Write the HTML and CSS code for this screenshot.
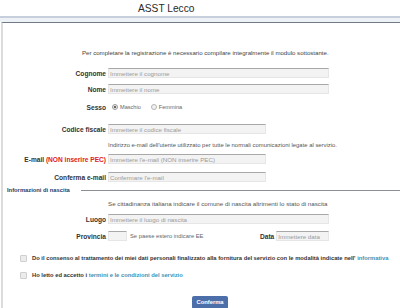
FILE: index.html
```html
<!DOCTYPE html>
<html lang="it">
<head>
    <meta charset="UTF-8">
    <meta name="viewport" content="width=device-width, initial-scale=1.0">
    <title>ASST Lecco - Registrazione</title>
    <link rel="stylesheet" href="styles.css">
</head>
<body>

    <!-- TESTATA -->
    <div class="testata">
        <span class="titolo">ASST Lecco</span>
    </div>
    <div class="fascia"></div>

    <!-- MODULO -->
    <div class="riquadro">
        <p class="intro">Per completare la registrazione è necessario compilare integralmente il modulo sottostante.</p>

        <form name="registrazione" class="modulo">
            <div class="riga r-cognome">
                <label class="lbl" for="cognome">Cognome</label>
                <input class="campo lungo" type="text" id="cognome" placeholder="Immettere il cognome">
            </div>
            <div class="riga r-nome">
                <label class="lbl" for="nome">Nome</label>
                <input class="campo lungo" type="text" id="nome" placeholder="Immettere il nome">
            </div>
            <div class="riga r-sesso">
                <span class="lbl">Sesso</span>
                <div class="scelte">
                    <label class="scelta"><input type="radio" name="sesso" checked> Maschio</label>
                    <label class="scelta"><input type="radio" name="sesso"> Femmina</label>
                </div>
            </div>
            <div class="riga r-codice">
                <label class="lbl" for="cf">Codice fiscale</label>
                <input class="campo medio" type="text" id="cf" placeholder="Immettere il codice fiscale">
            </div>
            <div class="riga r-nota1">
                <span class="lbl"></span>
                <span class="nota">Indirizzo e-mail dell'utente utilizzato per tutte le normali comunicazioni legate al servizio.</span>
            </div>
            <div class="riga r-email">
                <label class="lbl" for="email">E-mail <span class="rosso">(NON inserire PEC)</span></label>
                <input class="campo medio" type="text" id="email" placeholder="Immettere l'e-mail (NON inserire PEC)">
            </div>
            <div class="riga r-conferma">
                <label class="lbl" for="email2">Conferma e-mail</label>
                <input class="campo medio" type="text" id="email2" placeholder="Confermare l'e-mail">
            </div>

            <div class="sezione">
                <span class="sezione-titolo">Informazioni di nascita</span>
                <span class="sezione-linea"></span>
            </div>

            <div class="riga r-nota2">
                <span class="lbl"></span>
                <span class="nota">Se cittadinanza italiana indicare il comune di nascita altrimenti lo stato di nascita</span>
            </div>
            <div class="riga r-luogo">
                <label class="lbl" for="luogo">Luogo</label>
                <input class="campo lungo" type="text" id="luogo" placeholder="Immettere il luogo di nascita">
            </div>
            <div class="riga r-provincia">
                <label class="lbl" for="prov">Provincia</label>
                <input class="campo corto" type="text" id="prov">
                <span class="aiuto">Se paese estero indicare EE</span>
                <label class="lbl-data" for="data">Data</label>
                <input class="campo data" type="text" id="data" placeholder="Immettere data">
            </div>

            <div class="consenso c-primo">
                <input type="checkbox" id="privacy">
                <label for="privacy">Do il consenso al trattamento dei miei dati personali finalizzato alla fornitura del servizio con le modalità indicate nell' <a href="#">informativa</a></label>
            </div>
            <div class="consenso c-secondo">
                <input type="checkbox" id="termini">
                <label for="termini">Ho letto ed accetto i <a href="#">termini e le condizioni del servizio</a></label>
            </div>

            <div class="azioni">
                <button type="button" class="bottone">Conferma</button>
            </div>
        </form>
    </div>

</body>
</html>
```

FILE: styles.css
```css
body{
    margin:0;
    font-family:"Liberation Sans", Arial, sans-serif;
    color:#333;
    background:#fff;
}

/* testata */
.testata{
    height:16px;
    padding-left:138px;
    display:flex;
    align-items:center;
}

.titolo{
    font-size:10.2px;
    color:#2a2a2a;
}

.fascia{
    height:4px;
    border-top:2px solid #c6cfdb;
    background:#eef1f6;
}

/* riquadro del modulo */
.riquadro{
    margin-left:1px;
    border-left:2px solid #dcdcdc;
    border-top:1px solid #6f7a86;
    padding-top:26px;
    height:259px;
}

.intro{
    margin:0;
    font-size:6.1px;
    line-height:8px;
    color:#444;
    padding-left:79px;
    white-space:nowrap;
}

.modulo{
    margin:0;
}

.riga{
    display:flex;
    align-items:center;
    gap:2px;
    height:10px;
}

.lbl{
    width:103px;
    flex:none;
    text-align:right;
    font-size:6.6px;
    font-weight:bold;
    color:#333;
}

.rosso{
    color:#e0201c;
}

.campo{
    box-sizing:border-box;
    height:10px;
    margin:0;
    padding:0 1px;
    font-family:inherit;
    font-size:6.2px;
    color:#555;
    background:#f3f3f3;
    border:1px solid #e6e6e6;
    border-top-color:#a8a8a8;
    outline:none;
}

.campo::placeholder{
    color:#9a9a9a;
}

.lungo{ width:221px; }
.medio{ width:158px; }
.corto{ width:19px; }
.data{ width:53px; }

/* spaziature verticali */
.r-cognome{ margin-top:11px; }
.r-nome{ margin-top:6px; }
.r-sesso{ margin-top:8px; }
.r-codice{ margin-top:12px; }
.r-nota1{ margin-top:7px; height:8px; }
.r-email{ margin-top:5px; }
.r-conferma{ margin-top:8px; }
.r-nota2{ margin-top:5px; height:8px; }
.r-luogo{ margin-top:7px; }
.r-provincia{ margin-top:7px; }

.nota{
    font-size:5.9px;
    color:#555;
    white-space:nowrap;
}

.r-nota2 .nota{
    font-size:6.2px;
}

/* sesso */
.scelte{
    display:flex;
    gap:10px;
    padding-left:4px;
}

.scelta{
    display:flex;
    align-items:center;
    gap:2px;
    font-size:5.6px;
    color:#666;
}

.scelta input{
    appearance:none;
    margin:0;
    width:6px;
    height:6px;
    border-radius:50%;
    border:1px solid #b5b5b5;
    background:#f2f2f2;
    box-sizing:border-box;
}

.scelta input:checked{
    background:radial-gradient(circle, #666 0 1.3px, #eee 1.6px);
    border-color:#999;
}

/* sezione nascita */
.sezione{
    display:flex;
    align-items:center;
    gap:11px;
    height:8px;
    margin-top:4px;
    padding-left:4px;
}

.sezione-titolo{
    font-size:5.8px;
    font-weight:bold;
    color:#23406b;
}

.sezione-linea{
    flex:1;
    border-top:1px solid #8a8f96;
}

.aiuto{
    font-size:5.8px;
    color:#666;
    margin-left:1px;
    width:128px;
}

.lbl-data{
    font-size:6.6px;
    font-weight:bold;
    color:#333;
}

/* consensi */
.consenso{
    display:flex;
    align-items:center;
    gap:5px;
    height:8px;
    padding-left:17px;
    font-size:5.8px;
    font-weight:bold;
    color:#333;
    white-space:nowrap;
}

.c-primo{ margin-top:13px; }
.c-secondo{ margin-top:9px; }

.consenso input{
    appearance:none;
    margin:0;
    width:7px;
    height:7px;
    border:1px solid #cfcfcf;
    border-radius:1px;
    background:#ececec;
    box-sizing:border-box;
}

.consenso a{
    color:#3a93b8;
    text-decoration:none;
}

/* bottone */
.azioni{
    margin-top:11px;
    padding-left:189px;
}

.bottone{
    width:36px;
    height:13px;
    padding:0;
    border:none;
    border-radius:2px;
    background:#4d6fa9;
    color:#fff;
    font-family:inherit;
    font-size:5.8px;
    font-weight:bold;
}
```
